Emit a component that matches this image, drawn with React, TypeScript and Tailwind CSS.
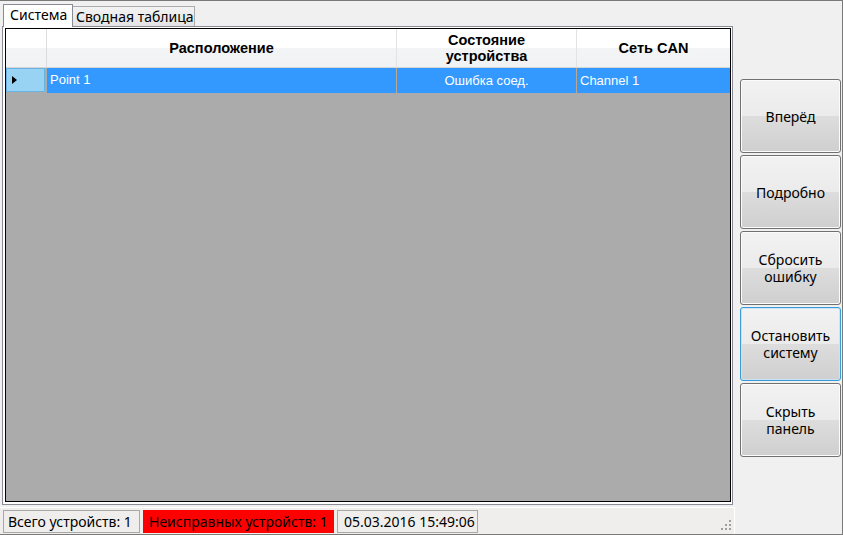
import React from "react";

const seg = { fontFamily: '"Noto Sans", "Open Sans", sans-serif' };
const ari = { fontFamily: '"Liberation Sans", Arial, sans-serif' };

function Btn({ lines, focused }: { lines: string[]; focused?: boolean }) {
  return (
    <div
      className={
        "w-[101px] h-[74px] rounded-[3px] border flex flex-col items-center justify-center text-[14px] leading-[17px] text-black bg-[linear-gradient(#f2f2f2_0%,#ebebeb_50%,#dddddd_50%,#cfcfcf_100%)] " +
        (focused ? "border-[#3c9bd6] shadow-[inset_0_0_0_1px_#c6e6f7]" : "border-[#707070] shadow-[inset_0_0_0_1px_#fcfcfc]")
      }
      style={seg}
    >
      {lines.map((l) => (
        <span key={l}>{l}</span>
      ))}
    </div>
  );
}

export default function App() {
  return (
    <div className="w-[843px] h-[535px] bg-[#f0f0f0] border-t border-r border-b border-[#7a7a7a] flex overflow-hidden">
      {/* left column */}
      <div className="w-[735px] flex flex-col">
        {/* tabs */}
        <div className="h-[25px] flex items-end pl-[3px] relative">
          <div
            className="relative z-10 h-[23px] w-[70px] bg-white border border-b-0 border-[#898c95] text-[14px] leading-[20px] pl-[6px] text-black -mb-[1px] whitespace-nowrap"
            style={seg}
          >
            Система
          </div>
          <div
            className="h-[20px] w-[122px] border border-b-0 border-l-0 border-[#acacac] bg-[linear-gradient(#f3f3f3,#e3e3e3)] text-[14px] leading-[19px] pl-[3px] text-black whitespace-nowrap"
            style={seg}
          >
            Сводная таблица
          </div>
        </div>
        {/* tab page */}
        <div className="ml-[2px] w-[731px] h-[479px] bg-white border border-[#898c95] pl-[2px] pt-[1px] pr-[1px] pb-[2px]">
          <div className="w-[726px] h-[474px] border border-black bg-[#ababab] flex flex-col">
            {/* header */}
            <div className="h-[39px] flex border-b border-[#d5d5d5] bg-[linear-gradient(#ffffff_0%,#ffffff_50%,#f3f4f6_50%,#f1f2f4_100%)] font-bold text-[14.5px] leading-[16px] text-black" style={ari}>
              <div className="w-[41px] border-r border-[#dcdcdc]" />
              <div className="w-[350px] border-r border-[#e3e3e3] flex items-center justify-center">Расположение</div>
              <div className="w-[180px] border-r border-[#e3e3e3] flex flex-col items-center justify-center">
                <span>Состояние</span>
                <span>устройства</span>
              </div>
              <div className="flex-1 flex items-center justify-center">Сеть CAN</div>
            </div>
            {/* row */}
            <div className="h-[25px] flex text-[13px] text-white" style={ari}>
              <div className="w-[41px] bg-[#ababab] pr-[1px] pb-[1px]">
                <div className="w-[39px] h-[24px] bg-[#99d3f3] border border-[#67b4e4] relative">
                  <div className="absolute left-[5px] top-[7px] w-0 h-0 border-t-[4.5px] border-b-[4.5px] border-l-[5px] border-t-transparent border-b-transparent border-l-black" />
                </div>
              </div>
              <div className="w-[350px] bg-[#3399ff] border-r border-[#b9a992] pl-[3px] leading-[23px]">Point 1</div>
              <div className="w-[180px] bg-[#3399ff] border-r border-[#b9a992] text-center leading-[25px]">Ошибка соед.</div>
              <div className="flex-1 bg-[#3399ff] pl-[3px] leading-[25px]">Channel 1</div>
            </div>
          </div>
        </div>
        {/* status bar */}
        <div className="mt-[2px] flex-1 bg-[#f0eeec] border-t border-r border-white flex items-start pt-[2px] pl-[3px] gap-[3px] relative text-[14px] leading-[21px] text-black whitespace-nowrap" style={seg}>
          <div className="h-[23px] border border-[#a8a8a8] px-[4px] w-[137px]">Всего устройств: 1</div>
          <div className="h-[23px] bg-[#ff0000] px-[5px] w-[191px] border border-[#ff0000]">Неисправных устройств: 1</div>
          <div className="h-[23px] border border-[#a8a8a8] px-[6px] w-[141px]">05.03.2016 15:49:06</div>
          <svg className="absolute right-[2px] bottom-[3px]" width="11" height="11" viewBox="0 0 11 11">
            <rect x="8" y="0" width="2" height="2" fill="#a0a0a0" />
            <rect x="4" y="4" width="2" height="2" fill="#a0a0a0" />
            <rect x="8" y="4" width="2" height="2" fill="#a0a0a0" />
            <rect x="0" y="8" width="2" height="2" fill="#a0a0a0" />
            <rect x="4" y="8" width="2" height="2" fill="#a0a0a0" />
            <rect x="8" y="8" width="2" height="2" fill="#a0a0a0" />
          </svg>
        </div>
      </div>
      {/* right column */}
      <div className="flex-1 pl-[5px] pt-[78px] flex flex-col gap-[2px]">
        <Btn lines={["Вперёд"]} />
        <Btn lines={["Подробно"]} />
        <Btn lines={["Сбросить", "ошибку"]} />
        <Btn lines={["Остановить", "систему"]} focused />
        <Btn lines={["Скрыть", "панель"]} />
      </div>
    </div>
  );
}
